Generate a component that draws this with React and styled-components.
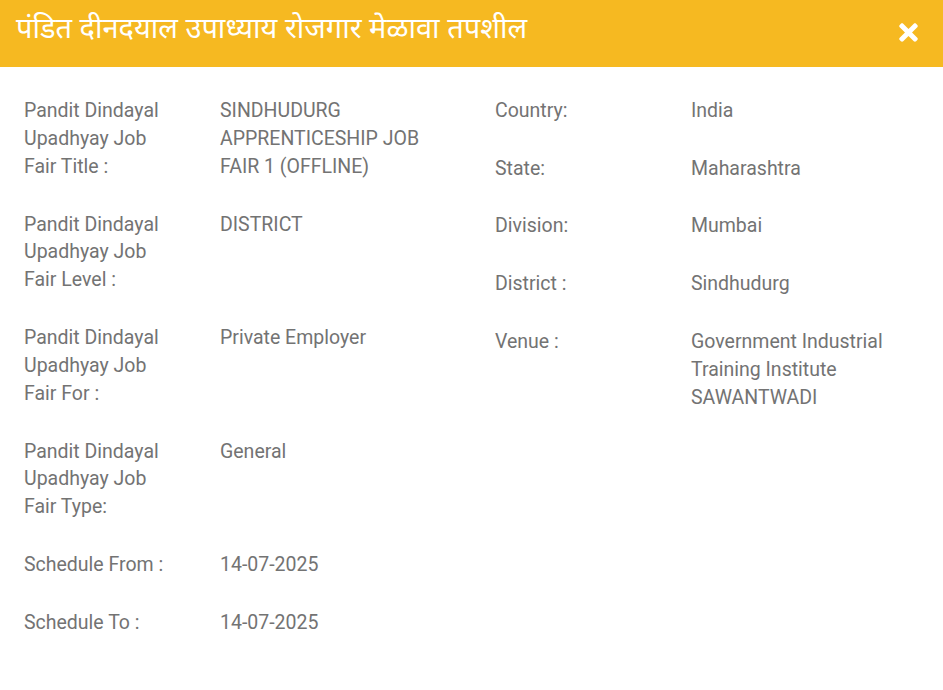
import styled, { createGlobalStyle } from "styled-components";
import { FaTimes } from "react-icons/fa";

const GlobalStyle = createGlobalStyle`
  html, body {
    margin: 0;
    padding: 0;
    background: #ffffff;
  }
  body {
    font-family: Roboto, "Noto Sans", "Liberation Sans", sans-serif;
  }
`;

const Modal = styled.div`
  width: 943px;
  min-height: 690px;
  background: #ffffff;
`;

const Header = styled.header`
  height: 67px;
  background-color: #f6b921;
  display: flex;
  align-items: center;
  justify-content: space-between;
  padding: 0 21px 3px 16px;
  box-sizing: border-box;
`;

const Title = styled.h4`
  margin: 0;
  color: #ffffff;
  font-family: "Noto Sans Devanagari", "Noto Sans", "Lohit Devanagari", sans-serif;
  font-size: 29px;
  font-weight: 400;
  line-height: 1;
  padding-bottom: 2px;
`;

const CloseBtn = styled(FaTimes)`
  color: #ffffff;
  font-size: 27px;
  cursor: pointer;
`;

const Body = styled.div`
  display: grid;
  grid-template-columns: 1fr 1fr;
  column-gap: 47px;
  padding: 30px 24px 20px 24px;
`;

const Column = styled.div`
  display: flex;
  flex-direction: column;
  gap: 29.8px;
`;

const Row = styled.div`
  display: grid;
  grid-template-columns: 196px 1fr;
  font-size: 19.5px;
  line-height: 27.9px;
  color: #737373;
`;

const Label = styled.div`
  padding-right: 38px;
`;

const Value = styled.div`
  padding-right: 4px;
`;

const leftRows = [
  ["Pandit Dindayal Upadhyay Job Fair Title :", "SINDHUDURG APPRENTICESHIP JOB FAIR 1 (OFFLINE)"],
  ["Pandit Dindayal Upadhyay Job Fair Level :", "DISTRICT"],
  ["Pandit Dindayal Upadhyay Job Fair For :", "Private Employer"],
  ["Pandit Dindayal Upadhyay Job Fair Type:", "General"],
  ["Schedule From :", "14-07-2025"],
  ["Schedule To :", "14-07-2025"],
];

const rightRows = [
  ["Country:", "India"],
  ["State:", "Maharashtra"],
  ["Division:", "Mumbai"],
  ["District :", "Sindhudurg"],
  ["Venue :", "Government Industrial Training Institute SAWANTWADI"],
];

const App = () => {
  return (
    <>
      <GlobalStyle />
      <Modal>
        <Header>
          <Title>पंडित दीनदयाल उपाध्याय रोजगार मेळावा तपशील</Title>
          <CloseBtn />
        </Header>
        <Body>
          <Column>
            {leftRows.map(([l, v]) => (
              <Row key={l}>
                <Label>{l}</Label>
                <Value>{v}</Value>
              </Row>
            ))}
          </Column>
          <Column>
            {rightRows.map(([l, v]) => (
              <Row key={l}>
                <Label>{l}</Label>
                <Value>{v}</Value>
              </Row>
            ))}
          </Column>
        </Body>
      </Modal>
    </>
  );
};

export default App;
